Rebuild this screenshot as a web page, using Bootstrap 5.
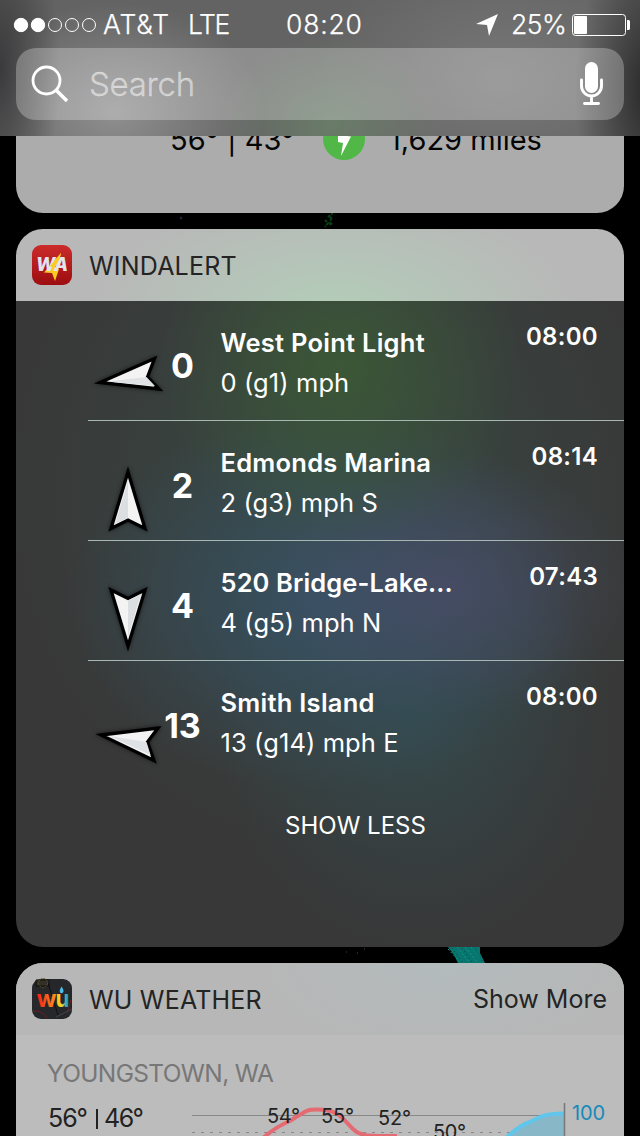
<!DOCTYPE html>
<html lang="en">
<head>
<meta charset="utf-8">
<meta name="viewport" content="width=device-width, initial-scale=1">
<title>Widgets</title>
<link href="https://cdn.jsdelivr.net/npm/bootstrap@5.3.0/dist/css/bootstrap.min.css" rel="stylesheet">
<style>
body{width:640px;height:1136px;background:#000;font-family:Inter,"Liberation Sans",sans-serif;color:#fff;line-height:1}
.topbar{height:136px;background:
 radial-gradient(ellipse 60px 170px at 0 70px,rgba(50,50,52,.85),transparent),
 radial-gradient(ellipse 75px 160px at 650px 90px,rgba(32,32,32,.9),transparent),
 radial-gradient(ellipse 150px 110px at 115px 112px,rgba(158,158,158,.75),transparent),
 radial-gradient(ellipse 110px 90px at 330px 125px,rgba(110,140,108,.6),transparent),
 radial-gradient(ellipse 190px 130px at 500px 80px,rgba(128,128,128,.7),transparent),#636363}
.status{height:48px;font-size:26.5px;font-weight:300;-webkit-text-stroke:.25px #fff}
.t{white-space:nowrap;display:block}
.search{height:72px;border-radius:20px;background:rgba(255,255,255,.27)}
.ph{font-size:33px;font-weight:300;letter-spacing:-.3px;-webkit-text-stroke:.3px rgba(255,255,255,.5);color:rgba(255,255,255,.5)}
.peek{height:77px;background:#acacac;border-radius:0 0 27px 27px;color:#050505;font-size:29px}
.panel{border-radius:27px;overflow:hidden}
.wind{height:718px}
.head{height:72px;font-size:25px;color:#242424}
.head .t{padding-top:2px}
.head.green{background:radial-gradient(ellipse 240px 120px at 318px 85px,#b3ceb8,#b8b8b8)}
.head.teal{background:radial-gradient(ellipse 190px 90px at 430px 0,#b3bbbd,transparent),#b7b7b7}
.list{height:646px;background:
 radial-gradient(ellipse 180px 180px at 325px 65px,rgba(60,92,52,.8),transparent),
 radial-gradient(ellipse 190px 130px at 430px 285px,rgba(76,76,106,.7),transparent),
 radial-gradient(ellipse 260px 190px at 310px 300px,rgba(54,84,106,.8),transparent),
 radial-gradient(ellipse 200px 230px at 400px 420px,rgba(50,82,88,.55),transparent),
 radial-gradient(ellipse 330px 360px at 320px 190px,rgba(56,82,74,.65),transparent),#383838}
.rowx{height:120px;margin-left:72px}
.line{border-bottom:1px solid #a7b7b2}
.arrow{width:74px;height:119px;overflow:visible;filter:drop-shadow(0 0 2px rgba(0,0,0,.55))}
.num{width:41px;font-size:34px;font-weight:700;padding-top:48px;display:flex;justify-content:center}
.info{margin-left:17.5px;padding-top:29px}
.nm{font-size:25.5px;font-weight:600;line-height:26px;letter-spacing:.25px}
.sb{font-size:25.5px;line-height:26px;margin-top:14px;letter-spacing:.1px}
.tm{font-size:24px;font-weight:600;padding-top:24px;margin-right:26px;letter-spacing:.3px}
.less{font-size:24px;padding-top:33px}
.gap{height:16px}
.wu{height:200px;background:#bcbcbc}
.town{height:53px;font-size:24.5px;letter-spacing:-.65px;color:#777;padding:26px 0 0 31px}
svg{display:block;flex:none}
</style>
</head>
<body class="overflow-hidden">
<header class="topbar">
 <div class="status d-flex align-items-center">
  <svg width="98" height="48" fill="#fff" stroke="#fff"><circle cx="21" cy="25" r="6.700"/><circle cx="38" cy="25" r="6.700"/><g fill="none" stroke-width="1"><circle cx="55" cy="25" r="6.500"/><circle cx="72" cy="25" r="6.500"/><circle cx="89" cy="25" r="6.500"/></g></svg>
  <span class="t" style="width:90px;padding-left:5px;letter-spacing:.9px">AT&amp;T</span>
  <span class="t" style="width:98px;letter-spacing:-1.4px">LTE</span>
  <span class="t" style="width:190px;letter-spacing:.8px">08:20</span>
  <svg width="35" height="48"><path d="M0 24 22 14 13 36 11 25Z" fill="#fff"/></svg>
  <span class="t" style="width:60px;letter-spacing:-.5px">25%</span>
  <svg width="60" height="48"><rect x="1.500" y="14.500" width="53" height="21" rx="3" fill="none" stroke="#fff"/><rect x="3" y="16" width="13" height="18" rx="1" fill="#fff"/><path d="M56 20h1.500a1.500 1.500 0 0 1 1.500 1.500v7a1.500 1.500 0 0 1-1.500 1.500H56Z" fill="#fff"/></svg>
 </div>
 <div class="search mx-3 d-flex align-items-center">
  <svg width="73" height="72" fill="none" stroke="#fff"><circle cx="30.500" cy="32.500" r="13.500" stroke-width="2.800"/><path d="M40 42 51 53" stroke-width="3.600"/></svg>
  <span class="t ph flex-grow-1">Search</span>
  <svg width="50" height="72"><rect x="11" y="14" width="13" height="31" rx="6.500" fill="#fff"/><path d="M7.500 32v6a10 10 0 0 0 20 0V32M17.500 48v7M10.500 55.500h14" fill="none" stroke="#fff" stroke-width="2.900" stroke-linecap="round"/></svg>
 </div>
</header>
<section class="peek mx-3 overflow-hidden">
 <div class="d-flex" style="margin-top:-11px">
  <span class="t" style="width:154px"></span>
  <span class="t" style="width:153px">56° | 43°</span>
  <svg width="66" height="42" style="margin-top:-7px"><circle cx="21" cy="21" r="21" fill="#51b848"/><path d="m15 15 4-9h8l-3 12 4 .5L18 38l2-13-5-1Z" fill="#fff"/></svg>
  <span class="t">1,629 miles</span>
 </div>
</section>
<svg class="gap" width="640" height="16"><path d="M328 4l5-4M325 7l3 3-3 4M330 4l2 2M330 12l2-2M331 5l-1 7" stroke="#0a6a26" stroke-width="2" fill="none" opacity=".6" stroke-dasharray="3 1"/><circle cx="181" cy="5" r="1.300" fill="#1d2740"/></svg>
<section class="panel wind mx-3">
 <div class="head green d-flex align-items-center">
  <svg width="73" height="72"><defs><linearGradient id="r" x2="0" y2="1"><stop stop-color="#cb2b2a"/><stop offset="1" stop-color="#9d0d10"/></linearGradient></defs><rect x="16" y="16" width="40" height="40" rx="9" fill="url(#r)"/><path d="M45 24 28 43.500l8 .5 3 8 4-12-4-2 4-5Z" fill="#fccb20"/><text x="20" y="41.500" font-size="18.500" font-weight="800" font-style="italic" fill="#e3e3ec" textLength="32" lengthAdjust="spacingAndGlyphs">WA</text><path d="M45 24 34 37l3 2 6-8Z" fill="#fccb20"/></svg>
  <span class="t" style="letter-spacing:.2px">WINDALERT</span>
 </div>
 <div class="list">
  <div class="rowx line d-flex">
   <svg class="arrow" viewBox="0 0 74 119"><path d="M12 81.500 66.500 57.500 59.500 76 71 88Z" fill="#f3f3f4" stroke="#000" stroke-width="3.300"/><path d="M20 80.500 58.500 76 67 85Z" fill="#dfe2e4"/></svg>
   <span class="num">0</span>
   <div class="info flex-grow-1"><span class="t nm">West Point Light</span><span class="t sb">0 (g1) mph</span></div><span class="t tm">08:00</span>
  </div>
  <div class="rowx line d-flex">
   <svg class="arrow" viewBox="0 0 74 119"><path d="M40 51 23 107.500 40 99 57 107.500Z" fill="#f3f3f4" stroke="#000" stroke-width="3.300"/><path d="M40 60V97L27 103Z" fill="#dcdfe1"/></svg>
   <span class="num">2</span>
   <div class="info flex-grow-1"><span class="t nm">Edmonds Marina</span><span class="t sb">2 (g3) mph S</span></div><span class="t tm">08:14</span>
  </div>
  <div class="rowx line d-flex">
   <svg class="arrow" viewBox="0 0 74 119"><path d="M40 105 23 49 40 57.500 57 49Z" fill="#f3f3f4" stroke="#000" stroke-width="3.300"/><path d="M40 96V59.500L53 53Z" fill="#dcdfe1"/></svg>
   <span class="num">4</span>
   <div class="info flex-grow-1"><span class="t nm" style="letter-spacing:.1px">520 Bridge-Lake...</span><span class="t sb">4 (g5) mph N</span></div><span class="t tm">07:43</span>
  </div>
  <div class="rowx d-flex">
   <svg class="arrow" viewBox="0 0 74 119"><path d="M13 74 70 67 59.500 81 66 99.500Z" fill="#f3f3f4" stroke="#000" stroke-width="3.300"/><path d="M21 75 58.500 81 62.500 94Z" fill="#dfe2e4"/></svg>
   <span class="num">13</span>
   <div class="info flex-grow-1"><span class="t nm">Smith Island</span><span class="t sb">13 (g14) mph E</span></div><span class="t tm">08:00</span>
  </div>
  <div class="less d-flex justify-content-center"><span class="t" style="margin-left:71px">SHOW LESS</span></div>
 </div>
</section>
<svg class="gap" width="640" height="16"><path d="M448 0h32v6l5 10H458l-4-8Z" fill="#08766f"/><path d="M448 2l11 12m-2-14 12 15m-4-15 12 15m-6-15 10 12" stroke="#0b9c8e" stroke-dasharray="2 2"/><path d="M452 1l10 14m0-14 10 14m3-12 8 12" stroke="#044" stroke-dasharray="1 3"/><path d="M346 5h1m10 1h1m6-4h1" stroke="#234" stroke-width="1.500"/></svg>
<section class="panel wu mx-3">
 <div class="head teal d-flex align-items-center">
  <svg width="73" height="72"><defs><linearGradient id="w"><stop stop-color="#f31d16"/><stop offset=".85" stop-color="#ff861c"/></linearGradient><linearGradient id="u"><stop stop-color="#ffc813"/><stop offset=".4" stop-color="#f5cf25"/><stop offset=".75" stop-color="#3ba8c0"/><stop offset="1" stop-color="#1583f0"/></linearGradient></defs><rect x="16" y="16" width="40" height="40" rx="9" fill="#25272a"/><path d="M32 20 42 52M20 17h13v6H20Z" fill="#343029" stroke="#111"/><circle cx="27" cy="20" r="4.500" fill="none" stroke="#5c531c" stroke-dasharray="2 1"/><path d="M17 48c7 0 10 1 14 7M51 50l4-13" fill="none" stroke="#751e23"/><path d="M40 54l16-8" stroke="#444"/><g font-size="24" font-weight="700"><text x="39.500" y="44" fill="url(#u)" textLength="14" lengthAdjust="spacingAndGlyphs">u</text><text x="20.500" y="44" fill="url(#w)" textLength="20" lengthAdjust="spacingAndGlyphs">w</text></g><path d="M45.500 23.500q3 4 1.500 6-1.500 1.500-3 0-1-2 1.500-6" fill="#4cbdec"/></svg>
  <span class="t flex-grow-1" style="letter-spacing:.2px">WU WEATHER</span><span class="t pt-0" style="margin-right:17px">Show More</span>
 </div>
 <div class="t town">YOUNGSTOWN, WA</div>
 <svg width="608" height="55" viewBox="16 1088 608 55" font-family="Inter" fill="#222">
  <path d="M192 1115.500H565" stroke="#888"/><path d="M192 1132.500H565" stroke="#888" stroke-dasharray="3 6"/>
  <path d="M508 1136Q520 1124 532 1121C542 1115 548 1113 564 1113V1140H505Z" fill="#88b7c8"/><path d="M506 1138Q520 1125 530 1122C543 1115 545 1114 564 1113.500" fill="none" stroke="#61c6eb" stroke-width="4"/>
  <path d="M564.500 1103V1143" stroke="#777" stroke-width="1.500"/>
  <path d="M262 1139Q275 1127 290 1121C307 1110 307 1109.500 317 1109.500C340 1109.500 342 1119 353 1129C360 1136 365 1136 397 1136" fill="none" stroke="#e56b73" stroke-width="4"/>
  <text x="48" y="1126.500" font-size="25" textLength="40">56°</text><path d="M97 1109V1129" stroke="#222" stroke-width="2"/><text x="104" y="1126.500" font-size="25" textLength="40">46°</text>
  <g font-size="20"><text x="267" y="1123" textLength="33">54°</text><text x="321" y="1123" textLength="33">55°</text><text x="378" y="1125" textLength="33">52°</text><text x="433" y="1139" textLength="33">50°</text><text x="572" y="1120" fill="#168abb" textLength="33">100</text></g>
 </svg>
</section>
<script src="https://cdn.jsdelivr.net/npm/bootstrap@5.3.0/dist/js/bootstrap.bundle.min.js"></script>
</body>
</html>
